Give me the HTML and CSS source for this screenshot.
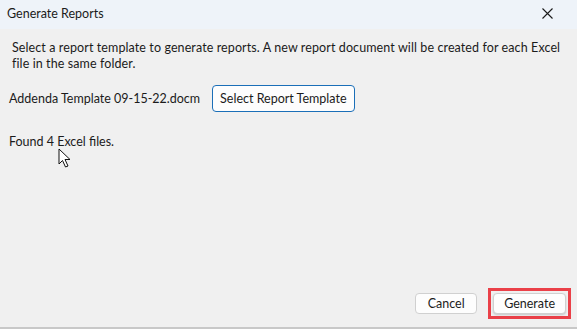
FILE: index.html
```html
<!DOCTYPE html>
<html lang="en">
<head>
  <meta charset="UTF-8">
  <title>Generate Reports</title>
  <link rel="stylesheet" href="styles.css">
</head>
<body>
  <div class="dialog">
    <div class="title-bar">
      <span class="title">Generate Reports</span>
      <button class="close-btn" aria-label="Close">
        <svg width="11" height="11" viewBox="0 0 11 11"><path d="M0.5 0.5 L10.5 10.5 M10.5 0.5 L0.5 10.5" stroke="#1a1a1a" stroke-width="1.1" fill="none"/></svg>
      </button>
    </div>
    <div class="content">
      <p class="intro">Select a report template to generate reports. A new report document will be created for each Excel file in the same folder.</p>
      <div class="template-row">
        <span class="template-name">Addenda Template 09-15-22.docm</span>
        <button class="btn btn-accent">Select Report Template</button>
      </div>
      <p class="found">Found 4 Excel files.</p>
      <svg class="cursor" width="14" height="20" viewBox="0 0 14 20">
        <path d="M1 1 L1 16 L4.5 12.5 L7.5 19 L10 18 L7 11.5 L12 11.5 Z" fill="#fff" stroke="#111" stroke-width="1" stroke-linejoin="round"/>
      </svg>
    </div>
    <div class="footer">
      <button class="btn">Cancel</button>
      <div class="highlight">
        <button class="btn btn-generate">Generate</button>
      </div>
    </div>
  </div>
</body>
</html>
```

FILE: styles.css
```css
* { box-sizing: border-box; margin: 0; padding: 0; }
html, body { height: 100%; }
body { font-family: Lato, "Noto Sans", sans-serif; font-size: 12.5px; color: #1b1b1b; background: #f0f0f0; }
.dialog { display: flex; flex-direction: column; height: 100%; border-bottom: 2px solid #c8c8c8; }
.title-bar { height: 29px; background: #eef3f9; display: flex; align-items: center; justify-content: space-between; padding: 0 0 0 7px; }
.title { line-height: 16px; margin-top: -2px; }
.close-btn { background: none; border: none; width: 46px; height: 29px; display: flex; align-items: center; justify-content: center; padding-right: 14px; margin-top: -2px; }
.content { position: relative; flex: 1; padding: 11px 12px 0 12px; }
.intro { line-height: 16px; max-width: 550px; letter-spacing: 0.1px; }
.template-row { display: flex; align-items: center; gap: 12px; margin-top: 13px; margin-left: -3px; }
.btn { font-family: inherit; font-size: 12.5px; color: #1b1b1b; background: #fdfdfd; border: 1px solid #d0d0d0; border-radius: 4px; height: 21px; padding: 0 10px; }
.btn-accent { height: 27px; padding: 0 7px; border-color: #1b6fb8; }
.found { margin-top: 22px; margin-left: -3px; }
.cursor { position: absolute; left: 58px; top: 119px; }
.footer { display: flex; justify-content: flex-end; align-items: center; gap: 11px; padding: 0 6px 8px 0; }
.footer .btn { min-width: 62px; }
.highlight { border: 3px solid #ea4048; padding: 2px; }
.btn-generate { display: block; min-width: 72px; box-shadow: 0 1px 2px rgba(0,0,0,0.18); }
```
